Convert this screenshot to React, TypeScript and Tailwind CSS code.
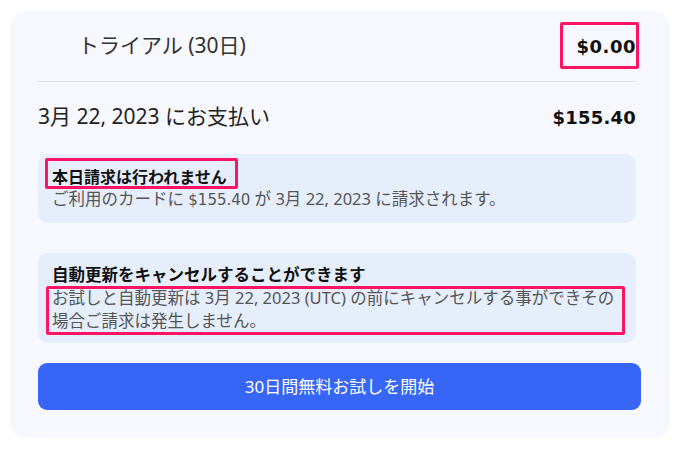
import React from "react";

const jp = { fontFamily: '"Noto Sans", "Noto Sans CJK JP", sans-serif' };
const num = { fontFamily: '"DejaVu Sans", "Noto Sans CJK JP", sans-serif' };

export default function App() {
  return (
    <div className="w-[680px] h-[458px] bg-white pt-[11px] pl-[10px]" style={jp}>
      <div className="relative w-[660px] h-[427px] bg-[#f7f8fd] rounded-[16px] pl-[28px] pr-[34px] flex flex-col">
        <div className="h-[71px] flex items-center justify-between border-b border-[#e2e4ea]">
          <span className="pl-[40px] text-[21px] text-[#333]">トライアル (30日)</span>
          <span className="text-[18px] font-bold text-[#111] tracking-[0.5px]" style={num}>$0.00</span>
        </div>
        <div className="h-[70px] flex items-center justify-between">
          <span className="text-[21px] text-[#222]">3月 22, 2023 にお支払い</span>
          <span className="text-[18px] font-bold text-[#111] tracking-[0.2px]" style={num}>$155.40</span>
        </div>
        <div className="mt-[2px] h-[69px] bg-[#e5eefa] rounded-[10px] px-[14px] pt-[12px] flex flex-col">
          <span className="text-[16px] font-bold text-[#111] leading-[23px]">本日請求は行われません</span>
          <span className="text-[16.5px] text-[#555] leading-[20px]">
            ご利用のカードに <span style={num} className="text-[15px]">$155.40</span> が 3月 22, 2023 に請求されます。
          </span>
        </div>
        <div className="mt-[30px] h-[90px] bg-[#e5eefa] rounded-[10px] px-[14px] pt-[10px] flex flex-col">
          <span className="text-[16.5px] font-bold text-[#111] leading-[23px]">自動更新をキャンセルすることができます</span>
          <span className="text-[16.5px] text-[#555] leading-[23px] whitespace-nowrap">
            お試しと自動更新は 3月 22, 2023 (UTC) の前にキャンセルする事ができその
            <br />
            場合ご請求は発生しません。
          </span>
        </div>
        <button className="mt-[20px] mr-[-5px] h-[47px] bg-[#3766f6] rounded-[9px] text-white text-[17px] flex items-center justify-center">
          30日間無料お試しを開始
        </button>
        <div className="absolute left-[550px] top-[11px] w-[79px] h-[47px] border-[3px] border-[#ff1464] rounded-[2px]" />
        <div className="absolute left-[35px] top-[147px] w-[193px] h-[31px] border-[3px] border-[#ff1464] rounded-[2px]" />
        <div className="absolute left-[36px] top-[275px] w-[579px] h-[49px] border-[3px] border-[#ff1464] rounded-[2px]" />
      </div>
    </div>
  );
}
